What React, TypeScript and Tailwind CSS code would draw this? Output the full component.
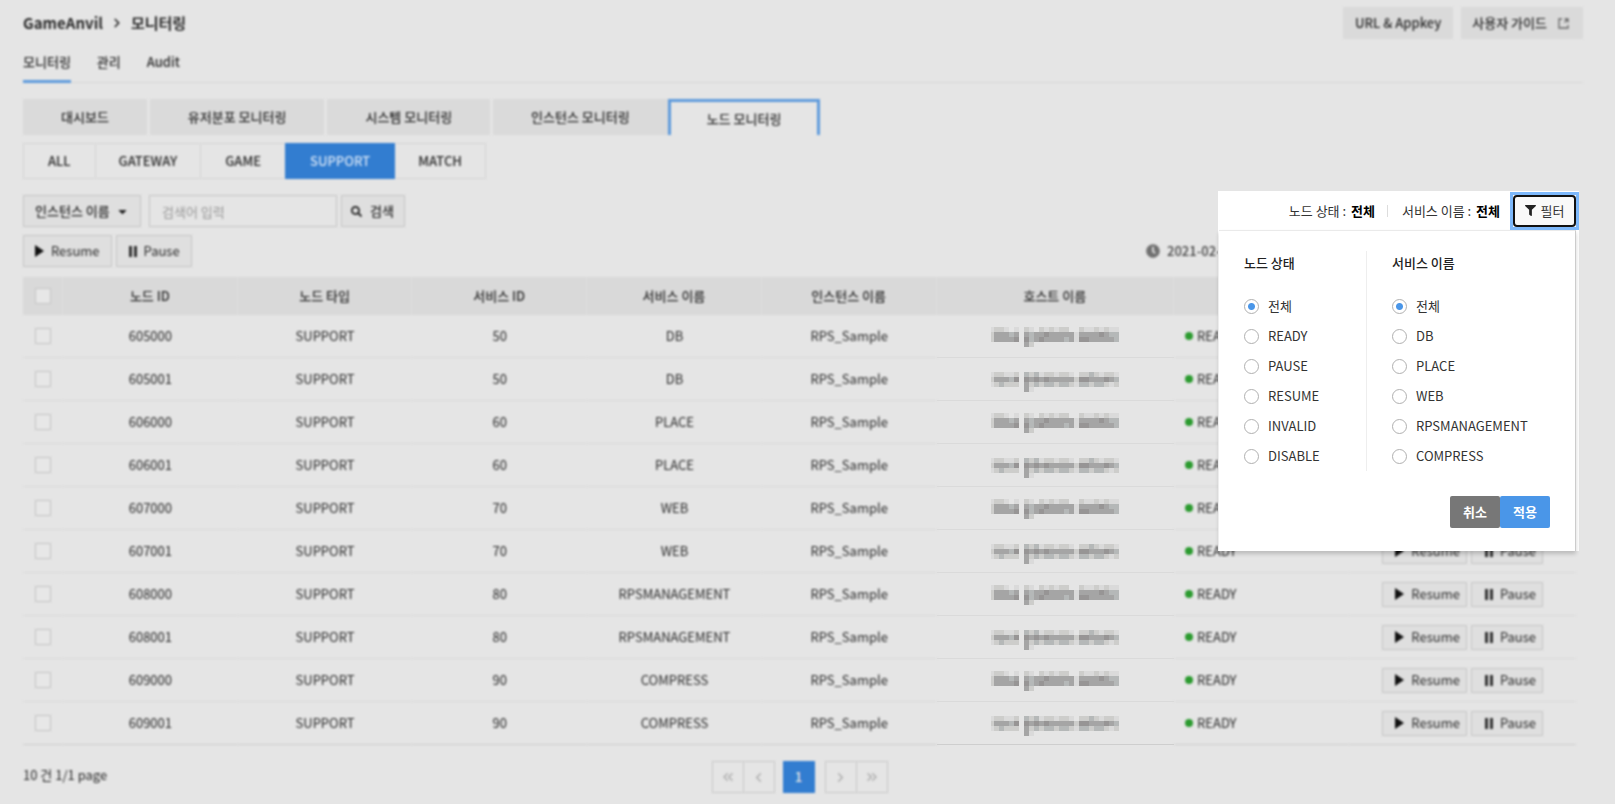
import { FaCaretDown, FaClock, FaFilter, FaSearch } from "react-icons/fa";
import { ChevronLeft, ChevronRight, ChevronsLeft, ChevronsRight } from "lucide-react";

const mainTabs = ["대시보드", "유저분포 모니터링", "시스템 모니터링", "인스턴스 모니터링"];

const columns = [
  { label: "노드 ID", width: "w-[11.25%]" },
  { label: "노드 타입", width: "w-[11.25%]" },
  { label: "서비스 ID", width: "w-[11.25%]" },
  { label: "서비스 이름", width: "w-[11.25%]" },
  { label: "인스턴스 이름", width: "w-[11.25%]" },
  { label: "호스트 이름", width: "w-[15.3%]" },
  { label: "노드 상태", width: "w-[11.25%]" },
  { label: "", width: "" },
];

const nodes = [
  { id: 605000, serviceId: 50, service: "DB" },
  { id: 605001, serviceId: 50, service: "DB" },
  { id: 606000, serviceId: 60, service: "PLACE" },
  { id: 606001, serviceId: 60, service: "PLACE" },
  { id: 607000, serviceId: 70, service: "WEB" },
  { id: 607001, serviceId: 70, service: "WEB" },
  { id: 608000, serviceId: 80, service: "RPSMANAGEMENT" },
  { id: 608001, serviceId: 80, service: "RPSMANAGEMENT" },
  { id: 609000, serviceId: 90, service: "COMPRESS" },
  { id: 609001, serviceId: 90, service: "COMPRESS" },
];

const states = ["전체", "READY", "PAUSE", "RESUME", "INVALID", "DISABLE"];
const services = ["전체", "DB", "PLACE", "WEB", "RPSMANAGEMENT", "COMPRESS"];

// Host names are masked: each letter is the shade of one 5px block.
const masks = [
  {
    top: 4,
    rows: ["abba0a0ba0bababb00baababaa", "bdddcd0dcddedddddaddddedcc", "bdddde0ecdeddddcdaeedddddc", "0000000db00000000000000000"],
  },
  {
    top: 6,
    rows: ["abbaab0cbcabbabba0bbcbabba", "bdddce0edededddddbeedddedc", "abcbbb0dbcbccbccbaccbccbab", "0000000da00000000000000000"],
  },
];
const shades: Record<string, string> = {
  a: "#dadada",
  b: "#cdcdcb",
  c: "#b5b8b8",
  d: "#a5a5a5",
  e: "#979595",
};

function MaskedHost({ variant }: { variant: number }) {
  const { top, rows } = masks[variant];
  return (
    <svg width="128" height="26" viewBox="0 0 128 26" shapeRendering="crispEdges" className="mx-auto" role="img" aria-label="masked host">
      {rows.map((row, y) =>
        row.split("").map((shade, x) =>
          shade === "0" ? null : (
            <rect key={`${x}-${y}`} x={x === 0 ? 0 : x * 5 - 2} y={top + y * 5} width={x === 0 ? 3 : 5} height="5" fill={shades[shade]} />
          ),
        ),
      )}
    </svg>
  );
}

function PlayIcon() {
  return (
    <svg width="9" height="12" viewBox="0 0 9 12" fill="#111">
      <path d="M0 0 L9 6 L0 12 Z" />
    </svg>
  );
}

function PauseIcon() {
  return (
    <svg width="8" height="11" viewBox="0 0 8 11" fill="#333">
      <rect width="3" height="11" />
      <rect x="5" width="3" height="11" />
    </svg>
  );
}

function ExternalIcon() {
  return (
    <svg width="11" height="11" viewBox="0 0 11 11" fill="none" stroke="#666" strokeWidth="1.3">
      <path d="M4 1 H1 V10 H10 V7 M6.5 1 H10 V4.5 M10 1 L6.5 4.5" />
    </svg>
  );
}

function Checkbox({ label }: { label: string }) {
  return (
    <input type="checkbox" aria-label={label} className="mx-auto block size-4 appearance-none border border-[#c4c4c4] bg-[#e7e7e7]" />
  );
}

function RadioGroup({ title, name, options }: { title: string; name: string; options: string[] }) {
  return (
    <fieldset>
      <legend className="pt-[2px] font-medium text-[#222]">{title}</legend>
      <div className="mt-[18px] flex flex-col">
        {options.map((option, i) => (
          <label key={option} className="flex h-[30px] items-center gap-[9px] text-[#333]">
            <input
              type="radio"
              name={name}
              defaultChecked={i === 0}
              className="size-[15px] appearance-none rounded-full border border-[#b0b0b0] bg-white checked:bg-[radial-gradient(circle,#4a96e8_3px,#fff_4px)]"
            />
            {option}
          </label>
        ))}
      </div>
    </fieldset>
  );
}

function FilterPanel() {
  return (
    <div className="absolute top-[191px] right-9 w-[361px] bg-white text-[#333]">
      <div className="flex h-[39px] items-center justify-end">
        <span>
          노드 상태 : <b className="ml-[2px] text-black">전체</b>
        </span>
        <span className="mr-[14px] ml-3 h-3 w-px bg-[#ddd]" />
        <span>
          서비스 이름 : <b className="ml-[2px] text-black">전체</b>
        </span>
        <div className="ml-[10px] border-3 border-[#7db8fb] bg-white">
          <button type="button" className="flex h-8 w-[63px] items-center justify-center gap-[5px] rounded-sm border-2 border-[#111] bg-[#f9f9f9]">
            <FaFilter size={11} color="#222" />
            필터
          </button>
        </div>
      </div>
      <form className="mr-[3px] ml-px border-t border-r border-t-[#eaeaea] border-r-[#ccc] bg-white px-[25px] pt-5 pb-[23px] shadow-[0_3px_4px_rgba(0,0,0,0.18)]">
        <div className="flex h-[220px]">
          <div className="w-[123px] border-r border-[#eee]">
            <RadioGroup title="노드 상태" name="state" options={states} />
          </div>
          <div className="pl-[25px]">
            <RadioGroup title="서비스 이름" name="service" options={services} />
          </div>
        </div>
        <div className="mt-[25px] flex justify-end font-bold text-white">
          <button type="button" className="h-8 w-[50px] rounded-xs bg-[#777]">
            취소
          </button>
          <button type="button" className="h-8 w-[50px] rounded-xs bg-[#4a96e8]">
            적용
          </button>
        </div>
      </form>
    </div>
  );
}

export default function App() {
  return (
    <div className="relative min-h-screen bg-[#e5e5e5] pb-[11px] font-['Noto_Sans_CJK_KR',sans-serif] text-[13px] leading-5 text-[#2a2a2a]">
      <div className="pr-8 pl-[23px] blur-[1px]">
        <header className="flex items-start justify-between pt-[7px] font-medium">
          <h1 className="flex h-8 items-center gap-[7px] text-[15px] font-bold">
            GameAnvil
            <ChevronRight size={14} strokeWidth={3} />
            모니터링
          </h1>
          <div className="flex gap-2">
            <button type="button" className="h-8 bg-[#dadada] px-3">
              URL &amp; Appkey
            </button>
            <a href="#guide" className="flex h-8 items-center gap-[11px] bg-[#dadada] pr-[14px] pl-[11px]">
              사용자 가이드
              <ExternalIcon />
            </a>
          </div>
        </header>
        <nav className="mt-[11px] flex h-[33px] gap-[26px] border-b border-[#d8d8d8] font-medium">
          <a href="#monitoring" className="h-[33px] border-b-3 border-[#5f9bdc] pt-[2px]">
            모니터링
          </a>
          <a href="#manage" className="pt-[2px]">
            관리
          </a>
          <a href="#audit" className="pt-[2px]">
            Audit
          </a>
        </nav>
      </div>

      <main className="pr-[39px] pl-[23px]">
        <div className="blur-[1px]">
          <div className="mt-4 flex gap-[3px] font-medium">
            {mainTabs.map((tab) => (
              <button key={tab} type="button" className="h-9 bg-[#dadada] px-[38px]">
                {tab}
              </button>
            ))}
            <button type="button" className="-ml-[3px] h-9 border-3 border-b-0 border-[#5f9bdc] px-9">
              노드 모니터링
            </button>
          </div>
          <div className="mt-2 flex font-medium">
            <button type="button" className="h-9 border border-[#d6d6d6] px-6">ALL</button>
            <button type="button" className="h-9 border border-l-0 border-[#d6d6d6] px-[23px]">GATEWAY</button>
            <button type="button" className="h-9 border border-x-0 border-[#d6d6d6] px-6">GAME</button>
            <button type="button" className="h-9 bg-[#327dd0] px-[25px] text-[#d3e3f5]">SUPPORT</button>
            <button type="button" className="h-9 border border-l-0 border-[#d6d6d6] px-[23px]">MATCH</button>
          </div>
          <div className="mt-4 flex font-medium">
            <button type="button" className="flex h-8 w-[118px] items-center justify-between border border-[#c6c6c6] bg-[#dfdfdf] px-[11px]">
              인스턴스 이름
              <FaCaretDown size={13} color="#222" />
            </button>
            <input
              type="text"
              aria-label="검색어"
              placeholder="검색어 입력"
              className="ml-2 h-8 w-[188px] border border-[#c6c6c6] px-3 font-normal placeholder:text-[#999]"
            />
            <button type="button" className="ml-1 flex h-8 items-center gap-2 border border-[#c6c6c6] bg-[#dfdfdf] pr-[10px] pl-[9px]">
              <FaSearch size={11} color="#222" />
              검색
            </button>
          </div>
          <div className="mt-2 flex items-center gap-1">
            <button type="button" className="flex h-8 items-center gap-[7px] border border-[#c6c6c6] bg-[#dfdfdf] px-[11px]">
              <PlayIcon />
              Resume
            </button>
            <button type="button" className="flex h-8 items-center gap-[7px] border border-[#c6c6c6] bg-[#dfdfdf] pr-[11px] pl-3">
              <PauseIcon />
              Pause
            </button>
            <p className="ml-auto flex w-[430px] items-center gap-[7px] font-medium text-[#444]">
              <FaClock size={14} color="#707070" />
              2021-02-25
            </p>
          </div>
        </div>

        <table className="mt-[10px] w-full table-fixed border-separate border-spacing-0 text-center">
          <thead className="blur-[1px]">
            <tr className="h-[38px] bg-[#d9d9d9]">
              <th className="w-10 border-r border-[#dedede]">
                <Checkbox label="전체 선택" />
              </th>
              {columns.map((column, i) => (
                <th key={i} className={`${column.width} border-r border-[#dedede] font-medium last:border-r-0`}>
                  {column.label}
                </th>
              ))}
            </tr>
          </thead>
          <tbody>
            {nodes.map((node, i) => (
              <tr key={node.id} className="h-[43px] *:border-b *:border-[#dadada] last:*:border-[#cecece]">
                <td className="blur-[1px]">
                  <Checkbox label={`${node.id} 선택`} />
                </td>
                <td className="blur-[1px]">{node.id}</td>
                <td className="blur-[1px]">SUPPORT</td>
                <td className="blur-[1px]">{node.serviceId}</td>
                <td className="blur-[1px]">{node.service}</td>
                <td className="blur-[1px]">RPS_Sample</td>
                <td>
                  <MaskedHost variant={i % 2} />
                </td>
                <td className="blur-[1px]">
                  <span className="flex items-center gap-1 pl-[11px]">
                    <span className="size-2 rounded-full bg-[#2b9a2f]" />
                    READY
                  </span>
                </td>
                <td className="blur-[1px]">
                  <div className="flex justify-end gap-1 pr-[33px]">
                    <button type="button" className="flex h-[25px] items-center gap-[7px] border border-[#c6c6c6] bg-[#dfdfdf] pr-[6px] pl-3">
                      <PlayIcon />
                      Resume
                    </button>
                    <button type="button" className="flex h-[25px] items-center gap-[7px] border border-[#c6c6c6] bg-[#dfdfdf] pr-[6px] pl-[13px]">
                      <PauseIcon />
                      Pause
                    </button>
                  </div>
                </td>
              </tr>
            ))}
          </tbody>
        </table>

        <footer className="mt-4 grid grid-cols-[1fr_auto_1fr] blur-[1px]">
          <p className="pt-1">10 건 1/1 page</p>
          <div className="flex text-[#aaa]">
            <button type="button" aria-label="처음" className="grid h-8 w-[31px] place-items-center border border-r-0 border-[#c9c9c9]">
              <ChevronsLeft size={16} />
            </button>
            <button type="button" aria-label="이전" className="grid h-8 w-8 place-items-center border border-[#c9c9c9]">
              <ChevronLeft size={15} />
            </button>
            <button type="button" className="mr-[10px] ml-2 h-8 w-8 bg-[#327dd0] font-medium text-[#e5e5e5]">
              1
            </button>
            <button type="button" aria-label="다음" className="grid h-8 w-8 place-items-center border border-[#c9c9c9]">
              <ChevronRight size={15} />
            </button>
            <button type="button" aria-label="마지막" className="grid h-8 w-[31px] place-items-center border border-l-0 border-[#c9c9c9]">
              <ChevronsRight size={16} />
            </button>
          </div>
        </footer>
      </main>

      <FilterPanel />
    </div>
  );
}
